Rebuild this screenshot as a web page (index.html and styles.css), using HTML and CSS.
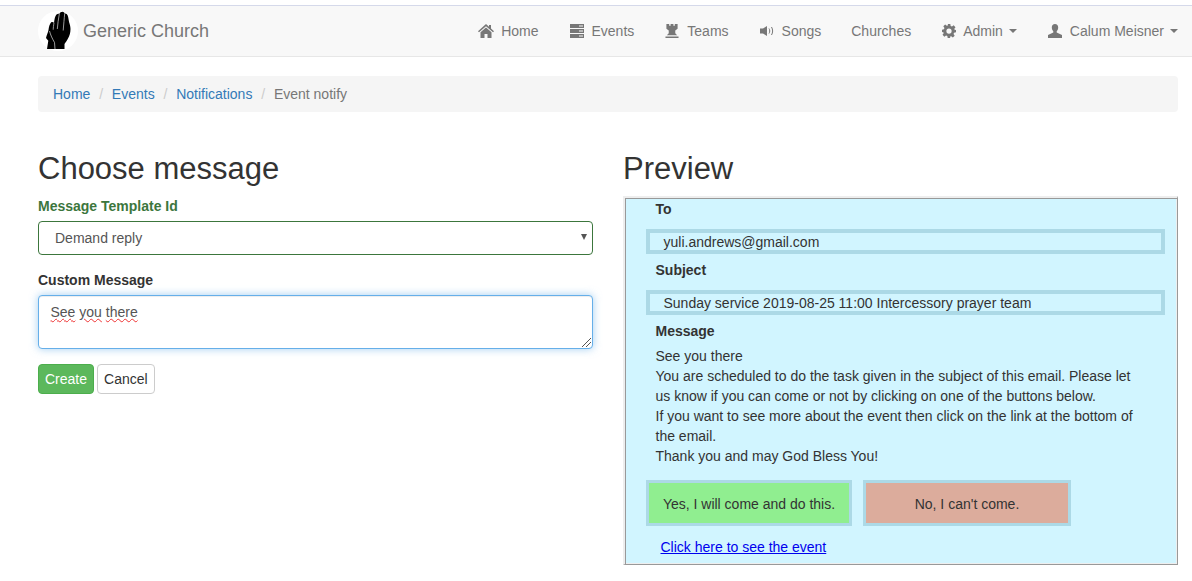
FILE: index.html
```html
<!DOCTYPE html>
<html lang="en">
<head>
  <meta charset="UTF-8" />
  <title>Event notify</title>
  <link rel="stylesheet" href="styles.css">
</head>
<body>
  <nav class="navbar">
    <a class="brand" href="#">
      <span class="logo">
        <svg width="40" height="40" viewBox="0 0 40 40">
          <path fill="#000" d="M9 38l1.300-8.300L8 27c.5-3 2-5 2.500-8 .4-3 1-6 2.500-7.500 1-.8 2-.5 3 .2C16.500 8 17 5 18.500 3.500c1-.8 2-1 2.800-.6C22 1.500 23 .8 24.500.8c1 0 1.800.8 2.200 1.700 1.300-.2 2.500.5 3 2 .8 2.500 1 5 1.500 7 .6 2 1.300 4 1.300 6.500 0 4-1 7-2.500 9.500-1 2-2.500 4-3.500 5.500V38z"/>
          <path fill="none" stroke="#ddd" stroke-width=".7" d="M21.300 3c-1 5-1.500 10-2 15M26.700 2.500c-.5 5-1 11-1.500 17M16 11.700c-.5 3-.7 5-.8 7M11.500 20c1 4 3 8 5 11.500l.5 6.500"/>
        </svg>
      </span>
      Generic Church
    </a>
    <ul class="nav-links">
      <li><a href="#">
        <svg class="icon" viewBox="0 0 16 14"><path d="M8 0l3 2.700V1h2v3.500L16 7.200l-1 1-7-6-7 6-1-1zM8 3.500l5.500 4.700V14H9.500v-4h-3v4H2.500V8.200z"/></svg>
        Home</a></li>
      <li><a href="#">
        <svg class="icon" viewBox="0 0 16 14"><path d="M1 0h14v4H1zM1 5h14v4H1zM1 10h14v4H1z"/><path fill="#f8f8f8" d="M10 1.500h4v1h-4zM10 6.500h4v1h-4zM10 11.500h4v1h-4z"/></svg>
        Events</a></li>
      <li><a href="#">
        <svg class="icon" viewBox="0 0 16 15"><path d="M2 0h3v2h1.500V0h3v2H11V0h3v5l-2.500 2v3l2 2H2.500l2-2V7L2 5zM1 13.500h14V15H1z"/></svg>
        Teams</a></li>
      <li><a href="#">
        <svg class="icon" viewBox="0 0 16 14"><path d="M1 4.500h3L8 2v10L4 9.500H1z"/><path fill="none" stroke="#777" stroke-width="1" d="M10 4.500c1 1.500 1 3.500 0 5M12.500 3c1.500 2.500 1.500 5.500 0 8"/></svg>
        Songs</a></li>
      <li><a href="#">Churches</a></li>
      <li><a href="#">
        <svg class="icon icon-gear" viewBox="0 0 16 16"><path fill-rule="evenodd" d="M6.500 0h3l.4 2.200 1.500.6 1.900-1.300 2.100 2.100-1.300 1.900.6 1.500L16 6.500v3l-2.200.4-.6 1.500 1.300 1.900-2.100 2.100-1.900-1.300-1.500.6L9.500 16h-3l-.4-2.200-1.500-.6-1.900 1.300-2.100-2.100 1.300-1.900-.6-1.500L0 9.500v-3l2.200-.4.6-1.500-1.300-1.900 2.100-2.100 1.900 1.300 1.500-.6zM8 5a3 3 0 1 0 0 6 3 3 0 0 0 0-6z"/></svg>
        Admin <span class="caret"></span></a></li>
      <li><a href="#">
        <svg class="icon" viewBox="0 0 16 14"><path d="M8 0c2 0 3.200 1.500 3.200 3.500 0 1.500-.7 3-1.500 3.800v1.200L15 11v3H1v-3l5.300-2.500V7.300C5.500 6.500 4.800 5 4.800 3.500 4.800 1.500 6 0 8 0z"/></svg>
        Calum Meisner <span class="caret"></span></a></li>
    </ul>
  </nav>

  <div class="container">
    <ol class="breadcrumb">
      <li><a href="#">Home</a></li>
      <li><a href="#">Events</a></li>
      <li><a href="#">Notifications</a></li>
      <li class="active">Event notify</li>
    </ol>

    <div class="columns">
      <form class="col-form">
        <h1>Choose message</h1>
        <div class="field has-success">
          <label for="template">Message Template Id</label>
          <div class="select-box" id="template">Demand reply<span class="select-arrow"></span></div>
        </div>
        <div class="field">
          <label for="custom">Custom Message</label>
          <div class="textarea-box" id="custom">
            <span class="misspelt">See</span> <span class="misspelt">you</span> <span class="misspelt">there</span>
            <svg class="resize" width="9" height="9" viewBox="0 0 9 9"><path fill="none" stroke="#555" d="M9 0L0 9M9 4L4 9"/></svg>
          </div>
        </div>
        <div class="form-buttons">
          <button type="button" class="btn btn-success">Create</button>
          <button type="button" class="btn">Cancel</button>
        </div>
      </form>

      <div class="col-preview">
        <h1>Preview</h1>
        <div class="mail">
          <div class="mail-label">To</div>
          <div class="mail-value">yuli.andrews@gmail.com</div>
          <div class="mail-label">Subject</div>
          <div class="mail-value">Sunday service 2019-08-25 11:00 Intercessory prayer team</div>
          <div class="mail-label">Message</div>
          <div class="mail-body">
            See you there<br>
            You are scheduled to do the task given in the subject of this email. Please let us know if you can come or not by clicking on one of the buttons below.<br>
            If you want to see more about the event then click on the link at the bottom of the email.<br>
            Thank you and may God Bless You!
          </div>
          <div class="mail-actions">
            <a class="mail-btn yes" href="#">Yes, I will come and do this.</a>
            <a class="mail-btn no" href="#">No, I can't come.</a>
          </div>
          <a class="mail-link" href="#">Click here to see the event</a>
        </div>
      </div>
    </div>
  </div>
</body>
</html>
```
FILE: styles.css
```css
html, body { margin: 0; padding: 0; }
body { font-family: "Liberation Sans", Arial, sans-serif; font-size: 14px; line-height: 20px; color: #333; background: #fff; }
a { text-decoration: none; color: #337ab7; }

.navbar {
  display: flex; justify-content: space-between; height: 50px;
  margin-top: 5px; padding: 0 0 0 38px;
  background: #f8f8f8; border-top: 1px solid #d5d9ea; border-bottom: 1px solid #e7e7e7;
}
.brand { display: flex; align-items: center; gap: 5px; font-size: 18px; color: #777; }
.logo { display: block; width: 40px; height: 40px; background: #fff; border-radius: 50%; }
.nav-links { display: flex; margin: 0 -1px 0 0; padding: 0; list-style: none; }
.nav-links a { display: flex; align-items: center; height: 50px; padding: 0 15px; color: #777; white-space: nowrap; }
.icon { width: 16px; height: 14px; margin-right: 7px; fill: #777; }
.icon-gear { margin-right: 6px; }
.caret { display: inline-block; width: 0; height: 0; margin-left: 6px; border-top: 4px solid #777; border-left: 4px solid transparent; border-right: 4px solid transparent; }

.container { padding: 0 14px 0 38px; }
.breadcrumb { display: flex; margin: 19px 0 0; padding: 8px 15px; list-style: none; background: #f5f5f5; border-radius: 4px; }
.breadcrumb li + li::before { content: "/"; padding: 0 8.8px; color: #ccc; }
.breadcrumb .active { color: #777; }

.columns { display: flex; gap: 30px; margin-top: 20px; }
.col-form { width: 555px; flex: none; }
.col-preview { flex: 1; }
h1 { margin: 20px 0 10px; font-size: 31px; line-height: 34px; font-weight: 500; }
label { display: block; margin-bottom: 5px; font-weight: 700; }
.field { margin-bottom: 15px; }
.has-success label { color: #3c763d; }

.select-box {
  position: relative; height: 34px; padding: 6px 16px; box-sizing: border-box;
  color: #555; background: #fff; border: 1px solid #3c763d; border-radius: 4px;
}
.select-arrow { position: absolute; right: 5px; top: 12px; border-top: 6px solid #555; border-left: 3px solid transparent; border-right: 3px solid transparent; }
.textarea-box {
  position: relative; height: 54px; padding: 6px 11.500px; box-sizing: border-box;
  color: #555; background: #fff; border: 1px solid #66afe9; border-radius: 4px;
  box-shadow: inset 0 1px 1px rgba(0,0,0,.075), 0 0 8px rgba(102,175,233,.6);
}
.misspelt { text-decoration: underline wavy #e33; text-decoration-thickness: 1px; text-underline-offset: 1px; }
.resize { position: absolute; right: 1px; bottom: 1px; }

.form-buttons { display: flex; gap: 3px; }
.btn { height: 30px; padding: 0 6px; margin: 0; font: inherit; color: #333; background: #fff; border: 1px solid #ccc; border-radius: 4px; }
.btn-success { color: #fff; background: #5cb85c; border-color: #4cae4c; }

.mail {
  height: 369px; padding: 1px 12px 0 21px; box-sizing: border-box; overflow: hidden;
  background: #d1f5ff; border-style: solid; border-width: 2px 1px 1px 2px; border-color: #eee #999 #999 #eee;
  box-shadow: inset 1px 1px 0 #999, inset -1px -1px 0 #eee;
}
.mail-label { padding-left: 9.500px; margin: 4px 0 0; font-weight: 700; }
.mail-label:first-child { margin-top: 0; }
.mail-value { margin: 10px 0 6px; height: 25px; padding: 0 13.500px; box-sizing: border-box; line-height: 18px; border: 4px solid #acd9e6; }
.mail-body { margin: 5px 20px 0 9.500px; }
.mail-actions { display: flex; gap: 11px; margin-top: 14px; }
.mail-btn { display: block; box-sizing: border-box; height: 46px; padding-top: 1px; line-height: 40px; text-align: center; color: #333; border: 3px solid #acd9e6; }
.yes { width: 206px; background: #90ee90; }
.no { width: 208px; background: #dcac9c; }
.mail-link { display: block; margin: 11px 0 0 14.500px; color: #00e; text-decoration: underline; }
```
